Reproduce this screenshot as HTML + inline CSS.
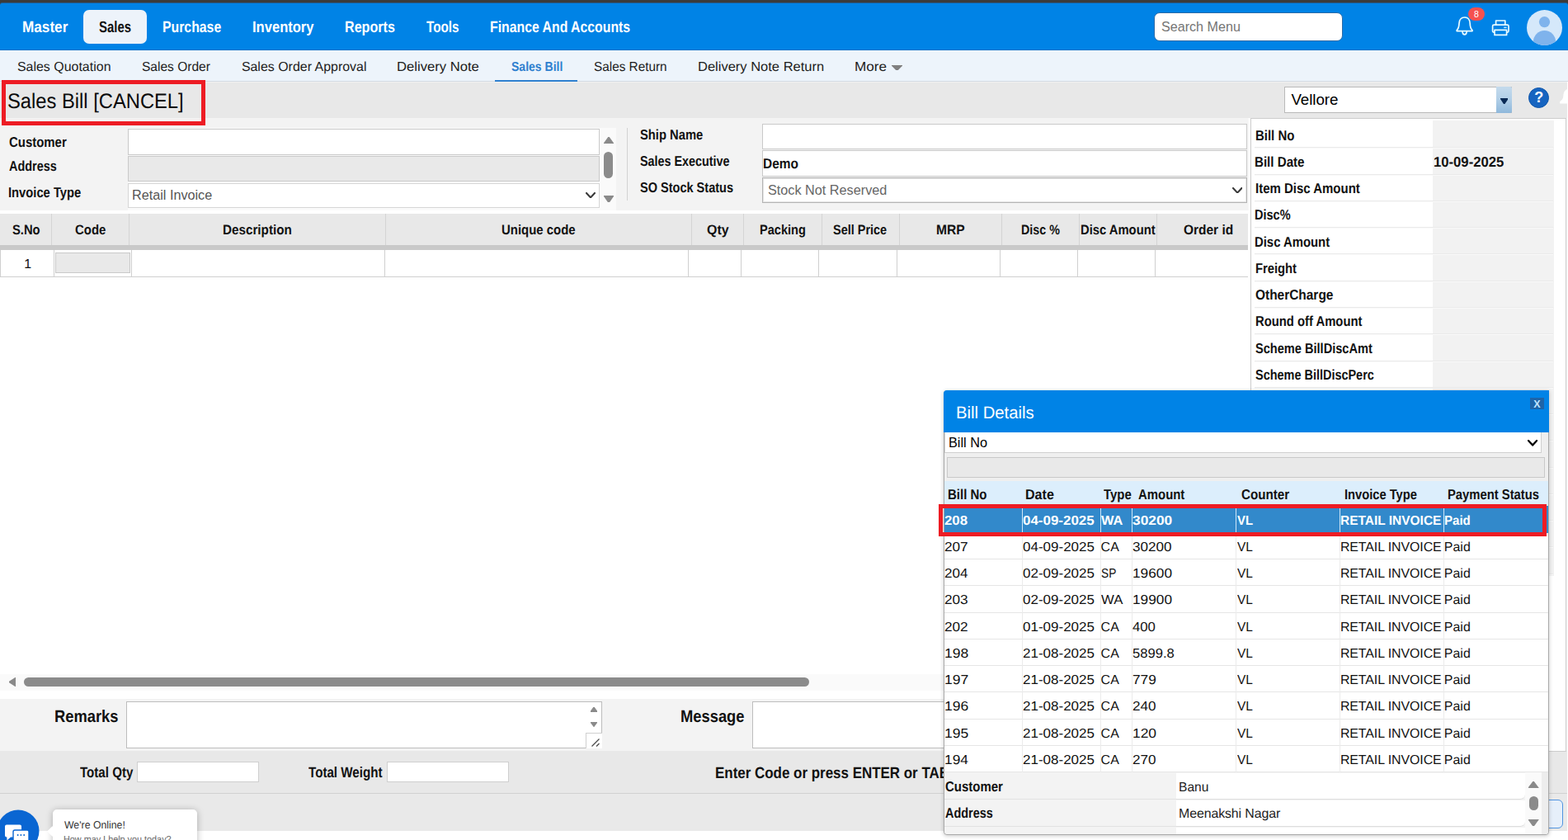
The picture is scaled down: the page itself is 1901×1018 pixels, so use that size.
<!DOCTYPE html>
<html lang="en">
<head>
<meta charset="utf-8">
<title>Sales Bill [CANCEL]</title>
<style>
html,body{margin:0;padding:0}
body{width:1901px;height:1018px;overflow:hidden;position:relative;background:#fff;font-family:'Liberation Sans','DejaVu Sans',sans-serif;color:#111}
div,span.t,svg{position:absolute;box-sizing:border-box}
span.t{white-space:pre;transform-origin:0 0;text-rendering:geometricPrecision}
span.a{text-rendering:auto}

.in{background:#fff;border:1px solid #c9c9c9}
.dis{background:#e9e9e9;border:1px solid #c9c9c9}
.ln{background:#d2d2d2}
.thumb{background:#8b8b8b;border-radius:6px}

</style>
</head>
<body>
<header>
<div style="left:0px;top:0px;width:1901px;height:8px;background:#3b3b3b"></div>
<div style="left:0px;top:3px;width:1901px;height:58px;background:#0083e6;border-radius:3px 3px 0 0;border-top:1px solid #235a8c;border-bottom:1px solid #0a72c8"></div>
<div style="left:101px;top:12px;width:77px;height:41px;background:#edf3fa;border-radius:7px"></div>
<span class="t" style="left:26.93px;top:24px;font-size:19.12px;line-height:19.12px;font-weight:700;transform:scaleX(0.8983);color:#fff;">Master</span>
<span class="t" style="left:120.25px;top:24px;font-size:19.12px;line-height:19.12px;font-weight:700;transform:scaleX(0.7815);">Sales</span>
<span class="t" style="left:197.2px;top:24px;font-size:19.12px;line-height:19.12px;font-weight:700;transform:scaleX(0.8273);color:#fff;">Purchase</span>
<span class="t" style="left:305.67px;top:24px;font-size:19.12px;line-height:19.12px;font-weight:700;transform:scaleX(0.8663);color:#fff;">Inventory</span>
<span class="t" style="left:418.23px;top:24px;font-size:19.12px;line-height:19.12px;font-weight:700;transform:scaleX(0.8441);color:#fff;">Reports</span>
<span class="t" style="left:516.83px;top:24px;font-size:19.12px;line-height:19.12px;font-weight:700;transform:scaleX(0.7979);color:#fff;">Tools</span>
<span class="t" style="left:593.65px;top:24px;font-size:19.12px;line-height:19.12px;font-weight:700;transform:scaleX(0.8275);color:#fff;">Finance And Accounts</span>
<div style="left:1399px;top:15px;width:229px;height:35px;background:#fff;border:1px solid #2a6aa6;border-radius:7px"></div>
<span class="t a" style="left:1408.0px;top:25px;font-size:16.67px;line-height:16.67px;transform:scaleX(0.9676);color:#757575;">Search Menu</span>
<svg style="left:1763px;top:18px" width="26" height="28" viewBox="0 0 26 28"><path d="M3.2 18.6 C5.6 16.4 5.9 13.6 6 10.4 C6.1 6 8.6 3 12.6 3 C16.6 3 19.1 6 19.2 10.4 C19.3 13.6 19.6 16.4 22 18.6 L22 19.6 L3.2 19.6 Z" fill="none" stroke="#e9fbff" stroke-width="1.7" stroke-linejoin="round"/><path d="M10 20.4 C10.2 25 15 25 15.2 20.4" fill="none" stroke="#e9fbff" stroke-width="1.6" stroke-linecap="round"/></svg>
<div style="left:1780px;top:9px;width:20px;height:16px;background:#f5514f;border-radius:8px"></div>
<span class="t a" style="left:1786.9px;top:12px;font-size:10.5px;line-height:10.5px;color:#fff;">8</span>
<svg style="left:1807px;top:22px" width="25" height="23" viewBox="0 0 25 23"><g fill="none" stroke="#e9fbff" stroke-width="1.7" stroke-linejoin="round"><path d="M6.6 8.2 V3 H17.8 V8.2"/><rect x="2.6" y="8.2" width="19.4" height="9" rx="1.6"/><rect x="5" y="14.4" width="14.6" height="6" fill="#0083e6"/></g><rect x="16.2" y="10.6" width="3.4" height="1.5" fill="#bfe9ff"/></svg>
<svg style="left:1851px;top:12px" width="43" height="43" viewBox="0 0 43 43"><defs><clipPath id="av"><circle cx="21.5" cy="21.5" r="21.5"/></clipPath></defs><circle cx="21.5" cy="21.5" r="21.5" fill="#d5e8fa"/><g clip-path="url(#av)" fill="#7fb3ec"><circle cx="21.5" cy="14.6" r="6.6"/><ellipse cx="21.5" cy="39" rx="13.6" ry="14"/></g></svg>
</header>
<nav>
<div style="left:0px;top:61px;width:1901px;height:38px;background:#edf4fb;border-bottom:1px solid #d3dae2"></div>
<span class="t" style="left:20.88px;top:74px;font-size:15.91px;line-height:15.91px;letter-spacing:0.03px;color:#1c1c1c;">Sales Quotation</span>
<span class="t" style="left:171.97px;top:74px;font-size:15.91px;line-height:15.91px;transform:scaleX(0.9767);color:#1c1c1c;">Sales Order</span>
<span class="t" style="left:292.88px;top:74px;font-size:15.91px;line-height:15.91px;letter-spacing:0.02px;color:#1c1c1c;">Sales Order Approval</span>
<span class="t" style="left:481.35px;top:74px;font-size:15.91px;line-height:15.91px;transform:scaleX(1.046);color:#1c1c1c;">Delivery Note</span>
<span class="t" style="left:719.75px;top:74px;font-size:15.91px;line-height:15.91px;transform:scaleX(0.964);color:#1c1c1c;">Sales Return</span>
<span class="t" style="left:845.73px;top:74px;font-size:15.91px;line-height:15.91px;transform:scaleX(1.0375);color:#1c1c1c;">Delivery Note Return</span>
<span class="t" style="left:1035.78px;top:74px;font-size:15.91px;line-height:15.91px;transform:scaleX(1.0774);color:#1c1c1c;">More</span>
<span class="t" style="left:619.52px;top:74px;font-size:15.91px;line-height:15.91px;font-weight:700;transform:scaleX(0.8812);color:#2f80cf;">Sales Bill</span>
<div style="left:600px;top:96.5px;width:100px;height:2.5px;background:#2f80cf"></div>
<svg style="left:1080.5px;top:78.5px" width="13.0" height="6.5" viewBox="0 0 13.0 6.5"><polygon points="0,0 13.0,0 6.5,6.5" fill="#808080" stroke="#808080" stroke-width="1.2" stroke-linejoin="round"/></svg>
</nav>
<main>
<div style="left:0px;top:99px;width:1901px;height:44px;background:#e8e8e8;border-top:1px solid #f1f1f1"></div>
<div style="left:0px;top:143px;width:1901px;height:875px;background:#f3f3f3"></div>
<div style="left:0px;top:255px;width:1516px;height:592px;background:#fff"></div>
<div style="left:1513px;top:143px;width:3px;height:112px;background:#f9f9f9"></div>
<span class="t" style="left:9.17px;top:111px;font-size:25.5px;line-height:25.5px;transform:scaleX(0.9307);color:#0a0a0a;">Sales Bill [CANCEL]</span>
<div style="left:1557px;top:105px;width:276px;height:32px;background:#fff;border:1px solid #b9b9b9"></div>
<div style="left:1814px;top:105px;width:19px;height:32px;background:linear-gradient(#c4daec,#b3d0e8 45%,#8fb8db);border-radius:0 2px 2px 0"></div>
<span class="t a" style="left:1565.47px;top:112px;font-size:18.75px;line-height:18.75px;letter-spacing:-0.08px;color:#000;">Vellore</span>
<svg style="left:1818.8px;top:118.6px" width="9.400000000000091" height="7.0" viewBox="0 0 9.400000000000091 7.0"><polygon points="0,0 9.400000000000091,0 4.7000000000000455,7.0" fill="#0a2a55" stroke="#0a2a55" stroke-width="1.2" stroke-linejoin="round"/></svg>
<div style="left:1853px;top:105.5px;width:25px;height:25px;background:#1664c0;border:1px solid #0f56ab;border-radius:50%"></div>
<span class="t a" style="left:1860.2px;top:109px;font-size:18px;line-height:18px;font-weight:700;color:#fff;">?</span>
<svg style="left:1889px;top:105px" width="12" height="26" viewBox="0 0 12 26"><path d="M14 2.5 C9.5 2.5 6.6 5.6 6.4 10 C6.3 13.4 5.6 15.8 2.2 18 L2.2 20.6 L14 20.6 Z" fill="#fff"/></svg>
<section class="form">
<div style="left:155px;top:154.5px;width:592px;height:100.5px;background:#fafafa"></div>
<span class="t" style="left:10.65px;top:164px;font-size:17.24px;line-height:17.24px;font-weight:700;transform:scaleX(0.8667);">Customer</span>
<span class="t" style="left:10.8px;top:193px;font-size:17.24px;line-height:17.24px;font-weight:700;transform:scaleX(0.8369);">Address</span>
<span class="t" style="left:10.12px;top:225px;font-size:17.24px;line-height:17.24px;font-weight:700;transform:scaleX(0.8553);">Invoice Type</span>
<div class="in" style="left:155px;top:156px;width:572px;height:31.5px;"></div>
<div class="dis" style="left:155px;top:189px;width:572px;height:31px;"></div>
<div class="in" style="left:155px;top:221.5px;width:572px;height:30.5px;border-color:#d6d6d6"></div>
<span class="t a" style="left:160.47px;top:229px;font-size:16.67px;line-height:16.67px;transform:scaleX(0.9724);color:#555;">Retail Invoice</span>
<svg style="left:710.2px;top:233px" width="12.0" height="7.400000000000006" viewBox="-1 -1 12.0 7.400000000000006"><polyline points="0,0 5.0,5.400000000000006 10.0,0" fill="none" stroke="#3a3a3a" stroke-width="2.1" stroke-linecap="round" stroke-linejoin="round"/></svg>
<svg style="left:731.5px;top:166px" width="12.0" height="8.400000000000006" viewBox="0 0 12.0 8.400000000000006"><polygon points="0,8.400000000000006 6.0,0 12.0,8.400000000000006" fill="#8a8a8a" stroke="#8a8a8a" stroke-width="1.2" stroke-linejoin="round"/></svg>
<div class="thumb" style="left:732px;top:184px;width:11px;height:32px;"></div>
<svg style="left:731.5px;top:236.8px" width="12.0" height="8.599999999999994" viewBox="0 0 12.0 8.599999999999994"><polygon points="0,0 12.0,0 6.0,8.599999999999994" fill="#8a8a8a" stroke="#8a8a8a" stroke-width="1.2" stroke-linejoin="round"/></svg>
<div class="ln" style="left:760px;top:155px;width:1px;height:88px;"></div>
<span class="t" style="left:776.17px;top:155px;font-size:17.24px;line-height:17.24px;font-weight:700;transform:scaleX(0.8568);">Ship Name</span>
<span class="t" style="left:776.15px;top:187px;font-size:17.24px;line-height:17.24px;font-weight:700;transform:scaleX(0.8325);">Sales Executive</span>
<span class="t" style="left:776.05px;top:219px;font-size:17.24px;line-height:17.24px;font-weight:700;transform:scaleX(0.8429);">SO Stock Status</span>
<div class="in" style="left:924px;top:150px;width:588px;height:30.5px;"></div>
<div class="in" style="left:924px;top:182px;width:588px;height:32px;"></div>
<div class="in" style="left:924px;top:215px;width:588px;height:31px;border:1px solid #b4b4b4;box-shadow:inset 0 0 0 1px #e6e6e6"></div>
<span class="t" style="left:925.48px;top:190px;font-size:17.24px;line-height:17.24px;font-weight:700;transform:scaleX(0.8957);">Demo</span>
<span class="t a" style="left:931.35px;top:223px;font-size:16.67px;line-height:16.67px;transform:scaleX(0.9744);color:#666;">Stock Not Reserved</span>
<svg style="left:1493.8px;top:226.8px" width="12.400000000000091" height="7.599999999999994" viewBox="-1 -1 12.400000000000091 7.599999999999994"><polyline points="0,0 5.2000000000000455,5.599999999999994 10.400000000000091,0" fill="none" stroke="#3a3a3a" stroke-width="2.1" stroke-linecap="round" stroke-linejoin="round"/></svg>
</section>
<section class="grid">
<div style="left:0px;top:259px;width:1513px;height:38px;background:#e8e8e8"></div>
<div style="left:0px;top:297px;width:1513px;height:5.5px;background:#c9c9c9"></div>
<div style="left:62px;top:259px;width:1px;height:38px;background:#d4d4d4"></div>
<div style="left:156px;top:259px;width:1px;height:38px;background:#d4d4d4"></div>
<div style="left:467px;top:259px;width:1px;height:38px;background:#d4d4d4"></div>
<div style="left:838px;top:259px;width:1px;height:38px;background:#d4d4d4"></div>
<div style="left:901px;top:259px;width:1px;height:38px;background:#d4d4d4"></div>
<div style="left:996px;top:259px;width:1px;height:38px;background:#d4d4d4"></div>
<div style="left:1090px;top:259px;width:1px;height:38px;background:#d4d4d4"></div>
<div style="left:1214px;top:259px;width:1px;height:38px;background:#d4d4d4"></div>
<div style="left:1308px;top:259px;width:1px;height:38px;background:#d4d4d4"></div>
<div style="left:1402px;top:259px;width:1px;height:38px;background:#d4d4d4"></div>
<span class="t" style="left:14.5px;top:271px;font-size:16.57px;line-height:16.57px;font-weight:700;transform:scaleX(0.8904);">S.No</span>
<span class="t" style="left:91.22px;top:271px;font-size:16.57px;line-height:16.57px;font-weight:700;transform:scaleX(0.9025);">Code</span>
<span class="t" style="left:270.17px;top:271px;font-size:16.57px;line-height:16.57px;font-weight:700;transform:scaleX(0.9202);">Description</span>
<span class="t" style="left:607.98px;top:271px;font-size:16.57px;line-height:16.57px;font-weight:700;transform:scaleX(0.9023);">Unique code</span>
<span class="t" style="left:856.83px;top:271px;font-size:16.57px;line-height:16.57px;font-weight:700;transform:scaleX(0.9607);">Qty</span>
<span class="t" style="left:921.25px;top:271px;font-size:16.57px;line-height:16.57px;font-weight:700;transform:scaleX(0.8797);">Packing</span>
<span class="t" style="left:1010.48px;top:271px;font-size:16.57px;line-height:16.57px;font-weight:700;transform:scaleX(0.8735);">Sell Price</span>
<span class="t" style="left:1135.22px;top:271px;font-size:16.57px;line-height:16.57px;font-weight:700;transform:scaleX(0.9447);">MRP</span>
<span class="t" style="left:1238.1px;top:271px;font-size:16.57px;line-height:16.57px;font-weight:700;transform:scaleX(0.8626);">Disc %</span>
<span class="t" style="left:1310.0px;top:271px;font-size:16.57px;line-height:16.57px;font-weight:700;transform:scaleX(0.8928);">Disc Amount</span>
<span class="t" style="left:1435.4px;top:271px;font-size:16.57px;line-height:16.57px;font-weight:700;transform:scaleX(0.9344);">Order id</span>
<div style="left:0px;top:302.5px;width:1513px;height:33.5px;background:#fff;border-bottom:1px solid #cfcfcf;border-left:1px solid #cfcfcf"></div>
<div style="left:65px;top:302.5px;width:1px;height:33px;background:#cfcfcf"></div>
<div style="left:159px;top:302.5px;width:1px;height:33px;background:#cfcfcf"></div>
<div style="left:466px;top:302.5px;width:1px;height:33px;background:#cfcfcf"></div>
<div style="left:834px;top:302.5px;width:1px;height:33px;background:#cfcfcf"></div>
<div style="left:898px;top:302.5px;width:1px;height:33px;background:#cfcfcf"></div>
<div style="left:992px;top:302.5px;width:1px;height:33px;background:#cfcfcf"></div>
<div style="left:1087px;top:302.5px;width:1px;height:33px;background:#cfcfcf"></div>
<div style="left:1212px;top:302.5px;width:1px;height:33px;background:#cfcfcf"></div>
<div style="left:1306px;top:302.5px;width:1px;height:33px;background:#cfcfcf"></div>
<div style="left:1400px;top:302.5px;width:1px;height:33px;background:#cfcfcf"></div>
<div class="dis" style="left:67px;top:306px;width:91px;height:24.5px;"></div>
<span class="t" style="left:29.15px;top:313px;font-size:15.91px;line-height:15.91px;">1</span>
<div style="left:0px;top:816.5px;width:1516px;height:20px;background:#fafafa"></div>
<svg style="left:10.5px;top:821.4px" width="8.5" height="11.0" viewBox="0 0 8.5 11.0"><polygon points="8.5,0 8.5,11.0 0,5.5" fill="#8a8a8a" stroke="#8a8a8a" stroke-width="1.2" stroke-linejoin="round"/></svg>
<div class="thumb" style="left:29px;top:821px;width:952px;height:11px;"></div>
</section>
<footer>
<div style="left:0px;top:847px;width:1516px;height:63px;background:#f3f3f3"></div>
<span class="t" style="left:66.3px;top:859px;font-size:20.6px;line-height:20.6px;font-weight:700;transform:scaleX(0.8897);">Remarks</span>
<div class="in" style="left:153px;top:850px;width:577px;height:57px;border-color:#bdbdbd"></div>
<svg style="left:715.6px;top:857.4px" width="8.0" height="5.399999999999977" viewBox="0 0 8.0 5.399999999999977"><polygon points="0,5.399999999999977 4.0,0 8.0,5.399999999999977" fill="#8a8a8a" stroke="#8a8a8a" stroke-width="1.2" stroke-linejoin="round"/></svg>
<svg style="left:715.6px;top:875.4px" width="8.0" height="5.399999999999977" viewBox="0 0 8.0 5.399999999999977"><polygon points="0,0 8.0,0 4.0,5.399999999999977" fill="#8a8a8a" stroke="#8a8a8a" stroke-width="1.2" stroke-linejoin="round"/></svg>
<div style="left:710px;top:887.5px;width:19.5px;height:19px;background:#fff;border-left:1px solid #d0d0d0;border-top:1px solid #d0d0d0"></div>
<svg style="left:716px;top:894px" width="12" height="12" viewBox="0 0 12 12"><path d="M1.5 10.5 L10.5 1.5 M7 10.5 L10.5 7" stroke="#4a4a4a" stroke-width="1.3" fill="none"/></svg>
<span class="t" style="left:824.62px;top:859px;font-size:20.6px;line-height:20.6px;font-weight:700;transform:scaleX(0.8909);">Message</span>
<div class="in" style="left:912px;top:850px;width:577px;height:57px;border-color:#bdbdbd"></div>
<div style="left:0px;top:910px;width:1901px;height:52px;background:#e8e8e8;border-bottom:1px solid #d2d2d2"></div>
<div style="left:0px;top:962px;width:1901px;height:45px;background:#e9e9e9"></div>
<div style="left:0px;top:1007px;width:1901px;height:11px;background:#fff"></div>
<span class="t" style="left:96.65px;top:928px;font-size:17.95px;line-height:17.95px;font-weight:700;transform:scaleX(0.8421);">Total Qty</span>
<div class="in" style="left:165.5px;top:923px;width:148.5px;height:24.5px;border-color:#cfcfcf"></div>
<span class="t" style="left:374.1px;top:928px;font-size:17.95px;line-height:17.95px;font-weight:700;transform:scaleX(0.8445);">Total Weight</span>
<div class="in" style="left:468.5px;top:923px;width:148.5px;height:24.5px;border-color:#cfcfcf"></div>
<span class="t" style="left:867.15px;top:928px;font-size:19.28px;line-height:19.28px;font-weight:700;transform:scaleX(0.8794);">Enter Code or press ENTER or TAB</span>
<div style="left:1858px;top:969px;width:36.5px;height:35px;background:#e6effa;border:1px solid #4f93e0;border-radius:6px"></div>
<div style="left:64px;top:981px;width:174.5px;height:60px;background:#fff;border-radius:5px;box-shadow:0 1px 8px rgba(0,0,0,.28)"></div>
<div style="left:58.5px;top:1002.5px;width:9px;height:9px;background:#fff;transform:rotate(45deg)"></div>
<span class="t" style="left:77.68px;top:994px;font-size:12.85px;line-height:12.85px;transform:scaleX(0.9566);color:#333;">We're Online!</span>
<span class="t" style="left:77.27px;top:1012px;font-size:11.63px;line-height:11.63px;transform:scaleX(0.9312);color:#666;">How may I help you today?</span>
<svg style="left:-4px;top:981px" width="52" height="52" viewBox="0 0 52 52"><circle cx="26" cy="26" r="25.5" fill="#0a66d2"/><path d="M12 18.5 h16 a2 2 0 0 1 2 2 v11 a2 2 0 0 1 -2 2 h-11 l-4.6 4 v-4 h-0.4 a2 2 0 0 1 -2 -2 v-11 a2 2 0 0 1 2 -2z" fill="#fff"/><rect x="20" y="25" width="19" height="14" rx="2" fill="#fff" stroke="#0a66d2" stroke-width="1.4"/><circle cx="25.6" cy="31" r="1" fill="#0a66d2"/><circle cx="29.4" cy="31" r="1" fill="#0a66d2"/><circle cx="33.2" cy="31" r="1" fill="#0a66d2"/></svg>
</footer>
<aside>
<div style="left:1516px;top:143px;width:382.5px;height:767.5px;background:#fff;border:1px solid #cdcdcd"></div>
<div style="left:1737px;top:146px;width:147px;height:552px;background:#f2f2f2"></div>
<span class="t" style="left:1521.53px;top:156px;font-size:17.24px;line-height:17.24px;font-weight:700;transform:scaleX(0.8682);">Bill No</span>
<span class="t" style="left:1521.4px;top:188px;font-size:17.24px;line-height:17.24px;font-weight:700;transform:scaleX(0.8776);">Bill Date</span>
<span class="t" style="left:1521.55px;top:220px;font-size:17.24px;line-height:17.24px;font-weight:700;transform:scaleX(0.8692);">Item Disc Amount</span>
<span class="t" style="left:1521.42px;top:252px;font-size:17.24px;line-height:17.24px;font-weight:700;transform:scaleX(0.842);">Disc%</span>
<span class="t" style="left:1521.45px;top:285px;font-size:17.24px;line-height:17.24px;font-weight:700;transform:scaleX(0.8624);">Disc Amount</span>
<span class="t" style="left:1521.53px;top:317px;font-size:17.24px;line-height:17.24px;font-weight:700;transform:scaleX(0.8561);">Freight</span>
<span class="t" style="left:1521.85px;top:349px;font-size:17.24px;line-height:17.24px;font-weight:700;transform:scaleX(0.8962);">OtherCharge</span>
<span class="t" style="left:1521.53px;top:381px;font-size:17.24px;line-height:17.24px;font-weight:700;transform:scaleX(0.8596);">Round off Amount</span>
<span class="t" style="left:1522.15px;top:414px;font-size:17.24px;line-height:17.24px;font-weight:700;transform:scaleX(0.8461);">Scheme BillDiscAmt</span>
<span class="t" style="left:1522.12px;top:446px;font-size:17.24px;line-height:17.24px;font-weight:700;transform:scaleX(0.8387);">Scheme BillDiscPerc</span>
<div style="left:1520.5px;top:178px;width:362px;height:2px;background:#eaeaea;border-bottom:1px solid #f9f9f9"></div>
<div style="left:1520.5px;top:211px;width:362px;height:2px;background:#eaeaea;border-bottom:1px solid #f9f9f9"></div>
<div style="left:1520.5px;top:243px;width:362px;height:2px;background:#eaeaea;border-bottom:1px solid #f9f9f9"></div>
<div style="left:1520.5px;top:275px;width:362px;height:2px;background:#eaeaea;border-bottom:1px solid #f9f9f9"></div>
<div style="left:1520.5px;top:307px;width:362px;height:2px;background:#eaeaea;border-bottom:1px solid #f9f9f9"></div>
<div style="left:1520.5px;top:340px;width:362px;height:2px;background:#eaeaea;border-bottom:1px solid #f9f9f9"></div>
<div style="left:1520.5px;top:372px;width:362px;height:2px;background:#eaeaea;border-bottom:1px solid #f9f9f9"></div>
<div style="left:1520.5px;top:404px;width:362px;height:2px;background:#eaeaea;border-bottom:1px solid #f9f9f9"></div>
<div style="left:1520.5px;top:437px;width:362px;height:2px;background:#eaeaea;border-bottom:1px solid #f9f9f9"></div>
<div style="left:1520.5px;top:469px;width:362px;height:2px;background:#eaeaea;border-bottom:1px solid #f9f9f9"></div>
<div style="left:1520.5px;top:501px;width:362px;height:2px;background:#eaeaea;border-bottom:1px solid #f9f9f9"></div>
<div style="left:1520.5px;top:533px;width:362px;height:2px;background:#eaeaea;border-bottom:1px solid #f9f9f9"></div>
<div style="left:1520.5px;top:566px;width:362px;height:2px;background:#eaeaea;border-bottom:1px solid #f9f9f9"></div>
<div style="left:1520.5px;top:598px;width:362px;height:2px;background:#eaeaea;border-bottom:1px solid #f9f9f9"></div>
<div style="left:1520.5px;top:630px;width:362px;height:2px;background:#eaeaea;border-bottom:1px solid #f9f9f9"></div>
<div style="left:1520.5px;top:662px;width:362px;height:2px;background:#eaeaea;border-bottom:1px solid #f9f9f9"></div>
<div style="left:1520.5px;top:695px;width:362px;height:2px;background:#eaeaea;border-bottom:1px solid #f9f9f9"></div>
<span class="t" style="left:1738.38px;top:188px;font-size:17.24px;line-height:17.24px;font-weight:700;transform:scaleX(0.9671);">10-09-2025</span>
</aside></main>
<section class="dialog">
<div style="left:1143.5px;top:473px;width:734.0px;height:538.5px;background:#efefef;border:1px solid #a9a9a9;border-radius:4px 0 4px 4px;box-shadow:0 1px 5px rgba(0,0,0,.22)"></div>
<div style="left:1143.5px;top:473px;width:734.0px;height:51px;background:#0083e6;border-radius:4px 0 0 0"></div>
<span class="t" style="left:1159.05px;top:491px;font-size:20.71px;line-height:20.71px;transform:scaleX(0.9782);color:#fff;">Bill Details</span>
<div style="left:1855px;top:481.5px;width:17px;height:14.5px;background:#1d64a8"></div>
<span class="t a" style="left:1859.15px;top:484px;font-size:12.5px;line-height:12.5px;font-weight:700;color:#bfe3ff;">X</span>
<div style="left:1144.5px;top:524px;width:724.5px;height:25px;background:#fff;border:1px solid #cfcfcf;border-top:0"></div>
<span class="t a" style="left:1150.15px;top:529px;font-size:16.67px;line-height:16.67px;transform:scaleX(0.9773);color:#000;">Bill No</span>
<svg style="left:1851.6px;top:533px" width="12.200000000000045" height="7.600000000000023" viewBox="-1 -1 12.200000000000045 7.600000000000023"><polyline points="0,0 5.100000000000023,5.600000000000023 10.200000000000045,0" fill="none" stroke="#000" stroke-width="2.3" stroke-linecap="round" stroke-linejoin="round"/></svg>
<div class="dis" style="left:1148px;top:554px;width:725px;height:25px;"></div>
<div style="left:1144.5px;top:583px;width:732px;height:29px;background:#dceefc"></div>
<span class="t" style="left:1149.05px;top:591px;font-size:17.24px;line-height:17.24px;font-weight:700;transform:scaleX(0.8701);">Bill No</span>
<span class="t" style="left:1243.33px;top:591px;font-size:17.24px;line-height:17.24px;font-weight:700;transform:scaleX(0.9324);">Date</span>
<span class="t" style="left:1337.7px;top:591px;font-size:17.24px;line-height:17.24px;font-weight:700;transform:scaleX(0.8658);">Type</span>
<span class="t" style="left:1380.03px;top:591px;font-size:17.24px;line-height:17.24px;font-weight:700;transform:scaleX(0.8651);">Amount</span>
<span class="t" style="left:1505.18px;top:591px;font-size:17.24px;line-height:17.24px;font-weight:700;transform:scaleX(0.8815);">Counter</span>
<span class="t" style="left:1630.47px;top:591px;font-size:17.24px;line-height:17.24px;font-weight:700;transform:scaleX(0.8514);">Invoice Type</span>
<span class="t" style="left:1755.2px;top:591px;font-size:17.24px;line-height:17.24px;font-weight:700;transform:scaleX(0.8589);">Payment Status</span>
<div style="left:1144.5px;top:612.8px;width:732px;height:322.5px;background:#fff"></div>
<div style="left:1144.5px;top:613px;width:732px;height:32.5px;background:#3289cb"></div>
<div style="left:1144.5px;top:677px;width:732px;height:1px;background:#e6e6e6"></div>
<div style="left:1144.5px;top:709px;width:732px;height:1px;background:#e6e6e6"></div>
<div style="left:1144.5px;top:742px;width:732px;height:1px;background:#e6e6e6"></div>
<div style="left:1144.5px;top:774px;width:732px;height:1px;background:#e6e6e6"></div>
<div style="left:1144.5px;top:806px;width:732px;height:1px;background:#e6e6e6"></div>
<div style="left:1144.5px;top:838px;width:732px;height:1px;background:#e6e6e6"></div>
<div style="left:1144.5px;top:871px;width:732px;height:1px;background:#e6e6e6"></div>
<div style="left:1144.5px;top:903px;width:732px;height:1px;background:#e6e6e6"></div>
<div style="left:1144.5px;top:935px;width:732px;height:1px;background:#e6e6e6"></div>
<div style="left:1239px;top:613px;width:1px;height:322.5px;background:#ebebeb"></div>
<div style="left:1239px;top:613px;width:1px;height:32.5px;background:#cfe6f8"></div>
<div style="left:1334px;top:613px;width:1px;height:322.5px;background:#ebebeb"></div>
<div style="left:1334px;top:613px;width:1px;height:32.5px;background:#cfe6f8"></div>
<div style="left:1372px;top:613px;width:1px;height:322.5px;background:#ebebeb"></div>
<div style="left:1372px;top:613px;width:1px;height:32.5px;background:#cfe6f8"></div>
<div style="left:1498px;top:613px;width:1px;height:322.5px;background:#ebebeb"></div>
<div style="left:1498px;top:613px;width:1px;height:32.5px;background:#cfe6f8"></div>
<div style="left:1624px;top:613px;width:1px;height:322.5px;background:#ebebeb"></div>
<div style="left:1624px;top:613px;width:1px;height:32.5px;background:#cfe6f8"></div>
<div style="left:1750px;top:613px;width:1px;height:322.5px;background:#ebebeb"></div>
<div style="left:1750px;top:613px;width:1px;height:32.5px;background:#cfe6f8"></div>
<span class="t" style="left:1145.4px;top:624px;font-size:15.91px;line-height:15.91px;font-weight:700;transform:scaleX(1.0588);color:#fff;">208</span>
<span class="t" style="left:1239.75px;top:624px;font-size:15.91px;line-height:15.91px;font-weight:700;transform:scaleX(1.0654);color:#fff;">04-09-2025</span>
<span class="t" style="left:1335.3px;top:624px;font-size:15.91px;line-height:15.91px;font-weight:700;transform:scaleX(1.0297);color:#fff;">WA</span>
<span class="t" style="left:1373.25px;top:624px;font-size:15.91px;line-height:15.91px;font-weight:700;transform:scaleX(1.0907);color:#fff;">30200</span>
<span class="t" style="left:1499.62px;top:624px;font-size:15.91px;line-height:15.91px;font-weight:700;transform:scaleX(0.9333);color:#fff;">VL</span>
<span class="t" style="left:1625.28px;top:624px;font-size:15.91px;line-height:15.91px;font-weight:700;transform:scaleX(0.973);color:#fff;">RETAIL INVOICE</span>
<span class="t" style="left:1750.93px;top:624px;font-size:15.91px;line-height:15.91px;font-weight:700;transform:scaleX(0.946);color:#fff;">Paid</span>
<span class="t" style="left:1145.15px;top:656px;font-size:15.91px;line-height:15.91px;transform:scaleX(1.08);">207</span>
<span class="t" style="left:1239.75px;top:656px;font-size:15.91px;line-height:15.91px;transform:scaleX(1.0688);">04-09-2025</span>
<span class="t" style="left:1334.55px;top:656px;font-size:15.91px;line-height:15.91px;letter-spacing:0.25px;">CA</span>
<span class="t" style="left:1373.0px;top:656px;font-size:15.91px;line-height:15.91px;transform:scaleX(1.0737);">30200</span>
<span class="t" style="left:1499.62px;top:656px;font-size:15.91px;line-height:15.91px;transform:scaleX(0.9707);">VL</span>
<span class="t" style="left:1624.9px;top:656px;font-size:15.91px;line-height:15.91px;letter-spacing:-0.07px;">RETAIL INVOICE</span>
<span class="t" style="left:1750.68px;top:656px;font-size:15.91px;line-height:15.91px;letter-spacing:0.1px;">Paid</span>
<span class="t" style="left:1145.03px;top:688px;font-size:15.91px;line-height:15.91px;transform:scaleX(1.0693);">204</span>
<span class="t" style="left:1239.75px;top:688px;font-size:15.91px;line-height:15.91px;transform:scaleX(1.0688);">02-09-2025</span>
<span class="t" style="left:1334.67px;top:688px;font-size:15.91px;line-height:15.91px;transform:scaleX(0.8608);">SP</span>
<span class="t" style="left:1372.5px;top:688px;font-size:15.91px;line-height:15.91px;transform:scaleX(1.0864);">19600</span>
<span class="t" style="left:1499.62px;top:688px;font-size:15.91px;line-height:15.91px;transform:scaleX(0.9707);">VL</span>
<span class="t" style="left:1624.9px;top:688px;font-size:15.91px;line-height:15.91px;letter-spacing:-0.07px;">RETAIL INVOICE</span>
<span class="t" style="left:1750.68px;top:688px;font-size:15.91px;line-height:15.91px;letter-spacing:0.1px;">Paid</span>
<span class="t" style="left:1145.03px;top:720px;font-size:15.91px;line-height:15.91px;transform:scaleX(1.08);">203</span>
<span class="t" style="left:1239.75px;top:720px;font-size:15.91px;line-height:15.91px;transform:scaleX(1.0688);">02-09-2025</span>
<span class="t" style="left:1335.05px;top:720px;font-size:15.91px;line-height:15.91px;transform:scaleX(1.0505);">WA</span>
<span class="t" style="left:1372.5px;top:720px;font-size:15.91px;line-height:15.91px;transform:scaleX(1.0864);">19900</span>
<span class="t" style="left:1499.62px;top:720px;font-size:15.91px;line-height:15.91px;transform:scaleX(0.9707);">VL</span>
<span class="t" style="left:1624.9px;top:720px;font-size:15.91px;line-height:15.91px;letter-spacing:-0.07px;">RETAIL INVOICE</span>
<span class="t" style="left:1750.68px;top:720px;font-size:15.91px;line-height:15.91px;letter-spacing:0.1px;">Paid</span>
<span class="t" style="left:1145.15px;top:753px;font-size:15.91px;line-height:15.91px;transform:scaleX(1.08);">202</span>
<span class="t" style="left:1239.75px;top:753px;font-size:15.91px;line-height:15.91px;transform:scaleX(1.0688);">01-09-2025</span>
<span class="t" style="left:1334.55px;top:753px;font-size:15.91px;line-height:15.91px;letter-spacing:0.25px;">CA</span>
<span class="t" style="left:1373.47px;top:753px;font-size:15.91px;line-height:15.91px;transform:scaleX(1.0524);">400</span>
<span class="t" style="left:1499.62px;top:753px;font-size:15.91px;line-height:15.91px;transform:scaleX(0.9707);">VL</span>
<span class="t" style="left:1624.9px;top:753px;font-size:15.91px;line-height:15.91px;letter-spacing:-0.07px;">RETAIL INVOICE</span>
<span class="t" style="left:1750.68px;top:753px;font-size:15.91px;line-height:15.91px;letter-spacing:0.1px;">Paid</span>
<span class="t" style="left:1144.53px;top:785px;font-size:15.91px;line-height:15.91px;transform:scaleX(1.102);">198</span>
<span class="t" style="left:1239.75px;top:785px;font-size:15.91px;line-height:15.91px;transform:scaleX(1.0688);">21-08-2025</span>
<span class="t" style="left:1334.55px;top:785px;font-size:15.91px;line-height:15.91px;letter-spacing:0.25px;">CA</span>
<span class="t" style="left:1373.07px;top:785px;font-size:15.91px;line-height:15.91px;transform:scaleX(1.0434);">5899.8</span>
<span class="t" style="left:1499.62px;top:785px;font-size:15.91px;line-height:15.91px;transform:scaleX(0.9707);">VL</span>
<span class="t" style="left:1624.9px;top:785px;font-size:15.91px;line-height:15.91px;letter-spacing:-0.07px;">RETAIL INVOICE</span>
<span class="t" style="left:1750.68px;top:785px;font-size:15.91px;line-height:15.91px;letter-spacing:0.1px;">Paid</span>
<span class="t" style="left:1144.65px;top:817px;font-size:15.91px;line-height:15.91px;transform:scaleX(1.102);">197</span>
<span class="t" style="left:1239.75px;top:817px;font-size:15.91px;line-height:15.91px;transform:scaleX(1.0688);">21-08-2025</span>
<span class="t" style="left:1334.55px;top:817px;font-size:15.91px;line-height:15.91px;letter-spacing:0.25px;">CA</span>
<span class="t" style="left:1372.85px;top:817px;font-size:15.91px;line-height:15.91px;transform:scaleX(1.084);">779</span>
<span class="t" style="left:1499.62px;top:817px;font-size:15.91px;line-height:15.91px;transform:scaleX(0.9707);">VL</span>
<span class="t" style="left:1624.9px;top:817px;font-size:15.91px;line-height:15.91px;letter-spacing:-0.07px;">RETAIL INVOICE</span>
<span class="t" style="left:1750.68px;top:817px;font-size:15.91px;line-height:15.91px;letter-spacing:0.1px;">Paid</span>
<span class="t" style="left:1144.53px;top:849px;font-size:15.91px;line-height:15.91px;transform:scaleX(1.102);">196</span>
<span class="t" style="left:1239.75px;top:849px;font-size:15.91px;line-height:15.91px;transform:scaleX(1.0688);">21-08-2025</span>
<span class="t" style="left:1334.55px;top:849px;font-size:15.91px;line-height:15.91px;letter-spacing:0.25px;">CA</span>
<span class="t" style="left:1373.1px;top:849px;font-size:15.91px;line-height:15.91px;transform:scaleX(1.0733);">240</span>
<span class="t" style="left:1499.62px;top:849px;font-size:15.91px;line-height:15.91px;transform:scaleX(0.9707);">VL</span>
<span class="t" style="left:1624.9px;top:849px;font-size:15.91px;line-height:15.91px;letter-spacing:-0.07px;">RETAIL INVOICE</span>
<span class="t" style="left:1750.68px;top:849px;font-size:15.91px;line-height:15.91px;letter-spacing:0.1px;">Paid</span>
<span class="t" style="left:1144.53px;top:882px;font-size:15.91px;line-height:15.91px;transform:scaleX(1.102);">195</span>
<span class="t" style="left:1239.75px;top:882px;font-size:15.91px;line-height:15.91px;transform:scaleX(1.0688);">21-08-2025</span>
<span class="t" style="left:1334.55px;top:882px;font-size:15.91px;line-height:15.91px;letter-spacing:0.25px;">CA</span>
<span class="t" style="left:1372.6px;top:882px;font-size:15.91px;line-height:15.91px;transform:scaleX(1.0949);">120</span>
<span class="t" style="left:1499.62px;top:882px;font-size:15.91px;line-height:15.91px;transform:scaleX(0.9707);">VL</span>
<span class="t" style="left:1624.9px;top:882px;font-size:15.91px;line-height:15.91px;letter-spacing:-0.07px;">RETAIL INVOICE</span>
<span class="t" style="left:1750.68px;top:882px;font-size:15.91px;line-height:15.91px;letter-spacing:0.1px;">Paid</span>
<span class="t" style="left:1144.53px;top:914px;font-size:15.91px;line-height:15.91px;transform:scaleX(1.0909);">194</span>
<span class="t" style="left:1239.75px;top:914px;font-size:15.91px;line-height:15.91px;transform:scaleX(1.0688);">21-08-2025</span>
<span class="t" style="left:1334.55px;top:914px;font-size:15.91px;line-height:15.91px;letter-spacing:0.25px;">CA</span>
<span class="t" style="left:1373.1px;top:914px;font-size:15.91px;line-height:15.91px;transform:scaleX(1.0733);">270</span>
<span class="t" style="left:1499.62px;top:914px;font-size:15.91px;line-height:15.91px;transform:scaleX(0.9707);">VL</span>
<span class="t" style="left:1624.9px;top:914px;font-size:15.91px;line-height:15.91px;letter-spacing:-0.07px;">RETAIL INVOICE</span>
<span class="t" style="left:1750.68px;top:914px;font-size:15.91px;line-height:15.91px;letter-spacing:0.1px;">Paid</span>
<div style="left:1144.5px;top:935.5px;width:732px;height:75.5px;background:#f3f3f3;border-radius:0 0 4px 4px"></div>
<div style="left:1849px;top:936px;width:20px;height:75px;background:#fafafa"></div>
<div style="left:1869px;top:936px;width:8px;height:75px;background:#ededed;border-radius:0 0 4px 0"></div>
<div style="left:1144.5px;top:968px;width:282px;height:1px;background:#e2e2e2"></div>
<div style="left:1144.5px;top:1001px;width:282px;height:1px;background:#e2e2e2"></div>
<div style="left:1425.5px;top:936.5px;width:423.5px;height:32px;background:#fff;border-radius:0 0 6px 0;border-bottom:1px solid #dedede"></div>
<div style="left:1425.5px;top:969.5px;width:423.5px;height:32px;background:#fff;border-radius:0 0 6px 0;border-bottom:1px solid #dedede"></div>
<div style="left:1425.5px;top:1002.5px;width:423.5px;height:8.5px;background:#fff"></div>
<span class="t" style="left:1145.53px;top:945px;font-size:17.24px;line-height:17.24px;font-weight:700;transform:scaleX(0.8692);">Customer</span>
<span class="t" style="left:1145.7px;top:977px;font-size:17.24px;line-height:17.24px;font-weight:700;transform:scaleX(0.8369);">Address</span>
<span class="t" style="left:1428.95px;top:947px;font-size:15.91px;line-height:15.91px;transform:scaleX(0.9784);color:#222;">Banu</span>
<span class="t" style="left:1429.03px;top:979px;font-size:15.91px;line-height:15.91px;letter-spacing:-0.1px;color:#222;">Meenakshi Nagar</span>
<svg style="left:1853.4px;top:947px" width="12.199999999999818" height="8" viewBox="0 0 12.199999999999818 8"><polygon points="0,8 6.099999999999909,0 12.199999999999818,8" fill="#8a8a8a" stroke="#8a8a8a" stroke-width="1.2" stroke-linejoin="round"/></svg>
<div class="thumb" style="left:1854px;top:965px;width:11px;height:17px;"></div>
<svg style="left:1853.4px;top:992.6px" width="12.199999999999818" height="8.399999999999977" viewBox="0 0 12.199999999999818 8.399999999999977"><polygon points="0,0 12.199999999999818,0 6.099999999999909,8.399999999999977" fill="#8a8a8a" stroke="#8a8a8a" stroke-width="1.2" stroke-linejoin="round"/></svg>
<div style="left:1900px;top:99px;width:1px;height:919px;background:#fff"></div>
</section>
<section class="marks">
<div style="left:2px;top:97px;width:247px;height:55px;border:5px solid #ed1c24"></div>
<div style="left:1138px;top:611px;width:737px;height:39px;border:5px solid #ed1c24"></div>
</section>
</body>
</html>
